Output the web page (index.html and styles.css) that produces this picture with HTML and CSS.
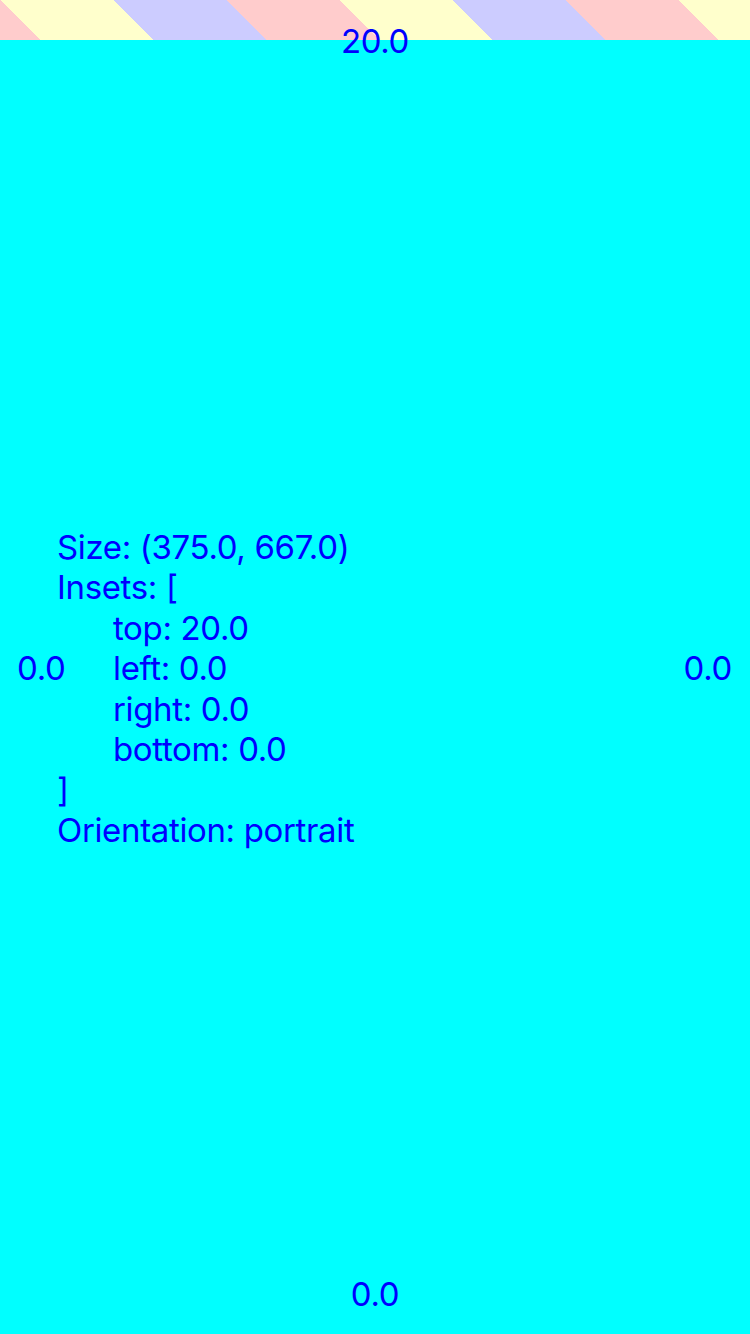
FILE: index.html
```html
<!DOCTYPE html>
<html lang="en">
<head>
<meta charset="utf-8">
<title>Safe area insets</title>
<link rel="stylesheet" href="styles.css">
</head>
<body>
<div class="screen">
  <div class="status-bar"></div>
  <div class="content">
    <div class="edge edge-top">20.0</div>
    <div class="edge edge-left">0.0</div>
    <div class="edge edge-right">0.0</div>
    <div class="edge edge-bottom">0.0</div>
    <div class="info">
      <div class="line">Size: (375.0, 667.0)</div>
      <div class="line">Insets: [</div>
      <div class="line indent">top: 20.0</div>
      <div class="line indent">left: 0.0</div>
      <div class="line indent">right: 0.0</div>
      <div class="line indent">bottom: 0.0</div>
      <div class="line">]</div>
      <div class="line">Orientation: portrait</div>
    </div>
  </div>
</div>
</body>
</html>
```
FILE: styles.css
```css
html, body {
  margin: 0;
  padding: 0;
}
body {
  width: 750px;
  height: 1334px;
  overflow: hidden;
  background: #00ffff;
  font-family: Inter, "Noto Sans", sans-serif;
  color: #0000ff;
}
.screen {
  display: flex;
  flex-direction: column;
  height: 1334px;
}
.status-bar {
  height: 40px;
  flex: none;
  background: repeating-linear-gradient(45deg,
    #ffcccc 0px, #ffcccc 28.3px,
    #ffffcc 28.3px, #ffffcc 108.3px,
    #ccccff 108.3px, #ccccff 188.3px,
    #ffcccc 188.3px, #ffcccc 240px);
}
.content {
  flex: 1;
  display: grid;
  grid-template-columns: 1fr;
  grid-template-rows: 1fr;
  font-size: 33px;
  letter-spacing: -0.35px;
  line-height: 40.5px;
}
.content > * {
  grid-area: 1 / 1;
}
.edge {
  white-space: nowrap;
}
.edge-top {
  justify-self: center;
  align-self: start;
  margin-top: -19px;
}
.edge-bottom {
  justify-self: center;
  align-self: end;
  margin-bottom: 20px;
}
.edge-left {
  justify-self: start;
  align-self: center;
  margin-left: 17px;
  margin-bottom: 38px;
}
.edge-right {
  justify-self: end;
  align-self: center;
  margin-right: 18px;
  margin-bottom: 38px;
}
.info {
  justify-self: start;
  align-self: center;
  margin-left: 57px;
  margin-top: 3px;
}
.line {
  white-space: nowrap;
}
.indent {
  padding-left: 56px;
}
```
